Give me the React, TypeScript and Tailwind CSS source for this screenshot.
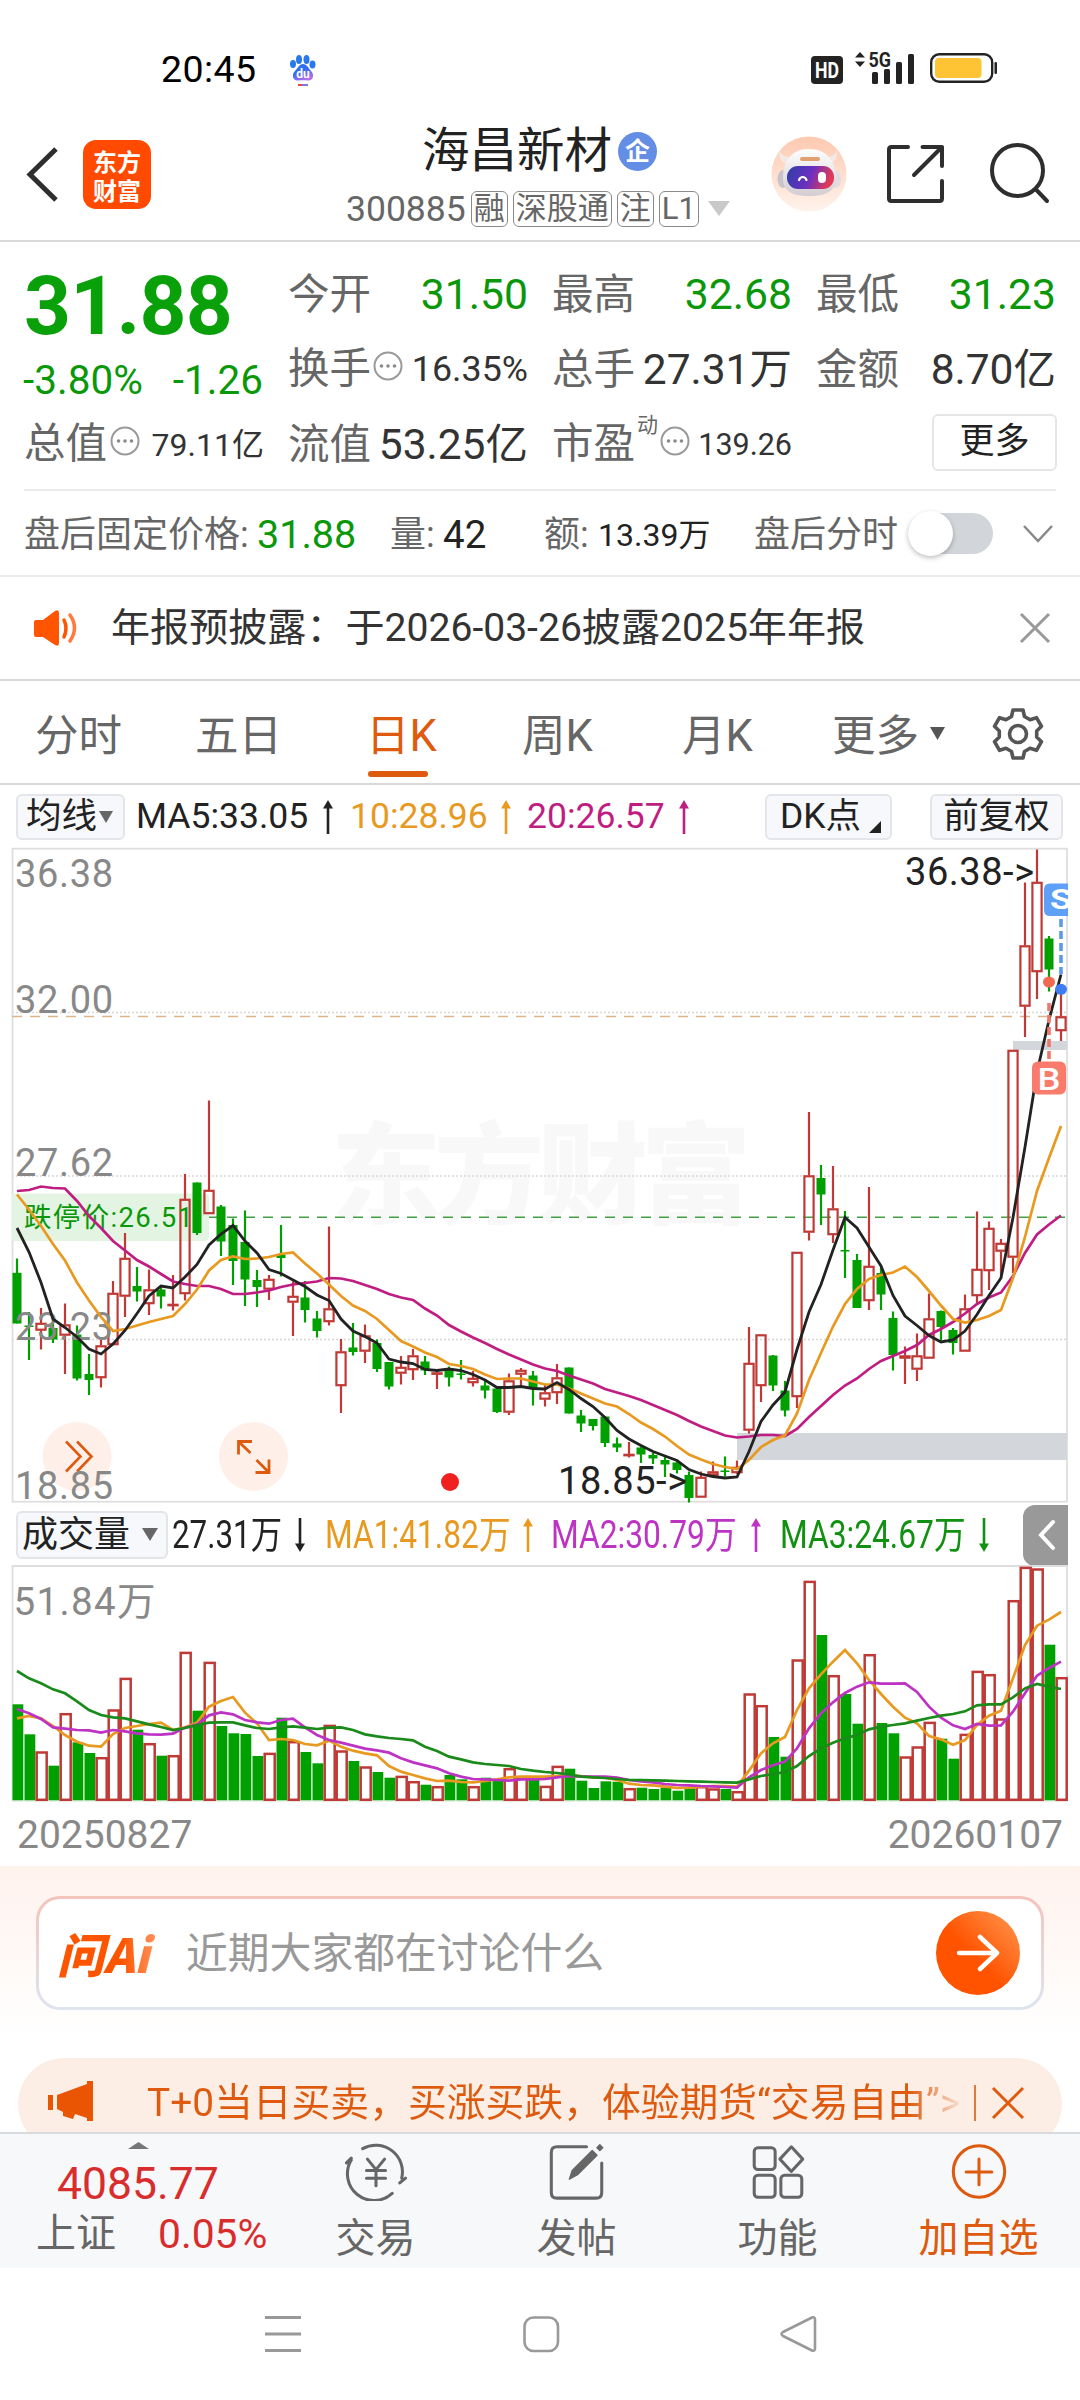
import type { ReactNode } from "react";

type Candle = ["r" | "g", number, number, number, number];

const STEP = 12;
const FIRST_X = 17;
const xAt = (i: number) => FIRST_X + i * STEP;

/* colour, high, body top, body bottom, low */
const candles: Candle[] = [
  ["g", 411.5, 425.8, 476.5, 476.5], ["g", 465, 478.5, 480, 513], ["r", 461, 476, 483.5, 502.5], ["g", 473.5, 481, 492.5, 496],
  ["r", 456.5, 477.5, 488.5, 527], ["g", 478.5, 487.5, 531.5, 533.5], ["g", 507, 527, 533, 548], ["r", 491.5, 498.5, 531, 540.5],
  ["r", 434, 446, 498, 498], ["r", 386, 411, 449.5, 470], ["g", 420, 439, 444.5, 454.5], ["r", 422.5, 442.5, 457, 468],
  ["g", 439.5, 442.5, 449.5, 461.5], ["r", 428, 457, 458.5, 463.5], ["r", 327, 352, 447, 453.5], ["g", 335.5, 335.5, 386, 388],
  ["r", 253.5, 343, 367, 367], ["g", 358, 359.5, 394.5, 409], ["g", 371.5, 378, 414, 438], ["g", 363.5, 395, 432.5, 459],
  ["g", 423, 433, 440, 460], ["r", 428, 432, 442.5, 453], ["g", 378, 408, 411, 429.5], ["r", 434.5, 449, 455.5, 489],
  ["g", 434, 450.5, 463, 475.5], ["g", 464, 471.5, 484, 490.5], ["r", 379.5, 461.5, 475, 478.5], ["r", 492, 504.5, 539, 566],
  ["g", 476, 500.5, 505, 508.5], ["r", 477.5, 488.5, 504.5, 516], ["g", 492.5, 496, 522, 525], ["g", 515, 515, 539.5, 542.5],
  ["r", 509, 520, 526.5, 537.5], ["r", 502, 508.5, 523, 533], ["g", 509, 514.5, 523.5, 528], ["r", 524.5, 525.5, 527.5, 542],
  ["g", 519.5, 523, 530.5, 539.5], ["g", 513, 526.5, 528, 532.5], ["r", 524, 531, 536, 539.5], ["g", 533, 538.5, 543.5, 551.5],
  ["g", 540.5, 541.5, 565, 566], ["r", 526.5, 533.5, 565.5, 568], ["r", 521, 523, 527.5, 539], ["g", 524, 528.5, 542, 558.5],
  ["r", 538, 545.5, 552.5, 559.5], ["r", 517, 530.5, 546, 557], ["g", 520.5, 520.5, 566.5, 566.5], ["g", 563, 568.5, 576.5, 585],
  ["g", 572, 572, 579, 583.5], ["g", 569.5, 569.5, 596, 600], ["g", 590.5, 596.5, 600.5, 605], ["r", 595, 607, 608.5, 610.5],
  ["g", 599.5, 600.5, 607.5, 616], ["g", 605.5, 608, 611.5, 617], ["g", 608, 613, 617.5, 630], ["g", 613, 615.5, 623, 626.5],
  ["g", 624.5, 628, 651, 655.5], ["r", 624.5, 630, 650.5, 650.5], ["r", 614.5, 624.5, 628.5, 629.5], ["g", 609.5, 623.5, 625, 629.5],
  ["r", 613.5, 620, 626, 627], ["r", 480, 516, 583.5, 586.5], ["r", 487.5, 487.5, 539, 555], ["g", 508, 508.5, 538.5, 544],
  ["g", 534, 543.5, 563.5, 569.5], ["r", 405, 405, 550, 561], ["r", 265, 328.5, 385.5, 393.5], ["g", 318, 331, 347.5, 378],
  ["r", 319, 361.5, 388, 396], ["g", 364, 403, 404, 431], ["g", 407, 413, 461, 461], ["r", 340, 419, 454, 463],
  ["g", 420, 426, 447.5, 463], ["g", 464.5, 471, 508, 523.5], ["r", 499.5, 508.5, 511.5, 537], ["r", 486.5, 508.5, 522.5, 534],
  ["r", 446.5, 471.5, 511.5, 511.5], ["g", 463.5, 464, 480, 494], ["g", 481, 483, 496, 507.5], ["r", 447.5, 461.5, 504.5, 504.5],
  ["r", 364.5, 422, 449, 456], ["r", 374.5, 381, 424, 443], ["r", 392, 396, 404.5, 431], ["r", 203, 203, 410.5, 426],
  ["r", 35.5, 98.5, 159.5, 190], ["r", 2.5, 35, 125, 152], ["g", 89, 91.5, 122.5, 144.5], ["r", 140.5, 169.5, 184, 194],
];

const ma5 = [381, 405, 435.5, 472, 480.5, 490, 502, 507, 497, 483.5, 466.5, 449, 439, 441, 430, 417.5, 398, 387, 378.5, 394, 406, 422.5, 426.5, 433, 439.5, 448, 453.5, 472, 484, 489.5, 496, 512, 515, 516.5, 522.5, 523.5, 522, 523.5, 527.5, 533, 540.5, 540.5, 539.5, 541.5, 542, 535.5, 542.5, 551.5, 559.5, 570.5, 583.5, 592, 598.5, 604.5, 609, 613.5, 622.5, 627, 629.5, 631, 630, 604.5, 574.5, 558, 545, 502.5, 465, 437.5, 403, 370.5, 381, 400, 419, 448.5, 469, 478.5, 488.5, 495, 493, 484, 467.5, 448.5, 431, 370.5, 300, 225, 173, 127.5];
const ma10 = [347.5, 362.5, 379, 397, 413.5, 435.5, 453.5, 470, 484, 482, 478.5, 475, 472, 469, 457, 442.5, 423.5, 413, 409.5, 412, 411.5, 410, 407, 405.5, 416.5, 426.5, 437.5, 449, 458.5, 464, 472, 483, 494, 499.5, 505.5, 510, 517, 519, 522, 527.5, 532, 531.5, 531.5, 534.5, 537.5, 537.5, 541.5, 546.5, 551.5, 556.5, 559.5, 567, 575.5, 582, 589.5, 599, 607.5, 612.5, 617, 620, 622, 613, 600, 593, 588.5, 566.5, 533, 506, 479.5, 457, 442, 432, 428, 425.5, 419.5, 430, 444, 458.5, 472, 475.5, 473, 469, 463, 431, 390, 344, 311, 279];
const ma20 = [344, 343, 339.5, 341, 341.5, 354, 369, 381, 394, 403.5, 413, 419.5, 427, 434.5, 437, 439, 439, 442, 447, 447, 445.5, 443.5, 440, 437.5, 436, 434.5, 431, 431.5, 434, 438, 442, 447, 450.5, 453, 461.5, 468.5, 478, 484.5, 490.5, 496, 502, 507.5, 512.5, 517.5, 521.5, 524, 528.5, 532.5, 536.5, 542, 545.5, 549, 553, 558, 563, 568, 574, 579.5, 584, 588.5, 590.5, 589.5, 588, 588, 589, 582, 570, 559, 548, 538.5, 531.5, 522, 514, 509, 504, 498, 488, 482, 475, 466.5, 457, 450.5, 445.5, 429, 406, 387.5, 377.5, 368.5];

const volTops = [140.3, 170.3, 187.3, 201.7, 149, 178.3, 189, 193, 145.3, 113.7, 165.7, 179, 191.7, 191, 87.7, 146.7, 97.7, 162, 169.3, 170, 192, 188.7, 153.7, 177, 188, 199.3, 160.7, 186.3, 197, 202.3, 208, 213.7, 211.7, 217, 220.7, 222, 211, 215.3, 222, 213.7, 216, 204, 212.7, 216, 221.7, 201.7, 204.7, 216.7, 224, 217.3, 217.7, 224, 223.7, 225, 223.7, 226.7, 224.3, 222, 224.3, 225, 227, 129.3, 141, 173, 192.7, 95.3, 16.7, 71, 111, 130, 159.7, 90, 159, 169.3, 192.3, 182.3, 157.7, 174.7, 194.7, 169.7, 106.7, 110, 154.3, 36, 2.7, 4.3, 80.7, 113];
const volMa1 = [685, 678, 685, 708, 735, 755, 767, 770, 732, 714, 708, 702, 698, 720, 712, 698, 650, 633, 621, 668, 700, 750, 747, 750, 762, 766, 752, 770, 782, 790, 796, 828, 845, 855, 865, 873, 872, 876, 877, 873, 868, 862, 860, 860, 860, 858, 857, 858, 862, 863, 870, 881, 885, 886, 890, 894, 893, 890, 888, 888, 890, 842, 790, 760, 741, 660, 595, 553, 515, 480, 520, 570, 612, 650, 683, 700, 738, 748, 764, 750, 705, 677, 662, 565, 465, 407, 389, 366];
const volMa2 = [657, 670, 687, 712, 716, 720, 721, 728, 720, 724, 730, 733, 734, 731, 713, 704, 676, 667, 673, 690, 697, 701, 690, 686, 712, 735, 750, 758, 767, 776, 781, 788, 805, 817, 826, 835, 850, 860, 867, 868, 870, 872, 868, 868, 867, 862, 858, 860, 860, 860, 863, 870, 874, 877, 882, 885, 886, 888, 889, 891, 893, 862, 840, 826, 815, 775, 715, 670, 637, 609, 590, 577, 581, 581, 580, 606, 650, 683, 706, 717, 702, 707, 706, 665, 610, 557, 534, 515];
const volMa3 = [543, 565, 580, 598, 610, 634, 660, 675, 682, 685, 694, 703, 711, 720, 714, 705, 698, 697, 697, 706, 714, 717, 712, 709, 713, 717, 713, 712, 720, 733, 739, 744, 747, 751, 770, 783, 800, 808, 817, 822, 825, 828, 837, 842, 846, 849, 853, 860, 862, 864, 867, 870, 870, 871, 872, 873, 874, 875, 876, 877, 878, 868, 858, 852, 846, 828, 798, 775, 758, 745, 735, 718, 710, 705, 700, 692, 684, 677, 672, 664, 646, 643, 643, 622, 595, 582, 590, 597];

const linePoints = (ys: number[]) => ys.map((y, i) => `${xAt(i)},${y}`).join(" ");
const volLine = (vs: number[]) => linePoints(vs.map((v) => v / 3 - 74));

const RED = "#bf3a36";
const GREEN = "#00a000";

function StatusBar() {
  return (
    <div className="flex h-[110px] items-start pt-[46px]">
      <span className="ml-[161px] w-[124px] text-[37.500px] leading-[46px] tracking-[0.4px] text-black">20:45</span>
      <svg className="mt-[8px]" width="36" height="34" viewBox="0 0 36 34">
        <defs>
          <linearGradient id="paw" x1="0" y1="0" x2="0.5" y2="1">
            <stop offset="0.5" stopColor="#2f6ff0" />
            <stop offset="1" stopColor="#b36cf0" />
          </linearGradient>
        </defs>
        <ellipse cx="8" cy="10" rx="3" ry="4" fill="#2a78ee" />
        <ellipse cx="14" cy="5.500" rx="3" ry="4.500" fill="#2a78ee" />
        <ellipse cx="21.500" cy="5.500" rx="3" ry="4.500" fill="#2a78ee" />
        <ellipse cx="27.500" cy="10.500" rx="3" ry="4" fill="#2a78ee" />
        <path d="M18 10c4 0 5.500 4 8 7 4 4 2 10-3 9.500-3-.5-7-.5-10 0-5 .5-7-5.500-3-9.500 3-3 4-7 8-7z" fill="url(#paw)" />
        <text x="18" y="24" textAnchor="middle" fontSize="12" fontWeight="700" fill="#fff">du</text>
        <rect x="13" y="30" width="10" height="2" fill="#7a77e8" />
        <rect x="13" y="30" width="4" height="2" fill="#e04848" />
      </svg>
      <svg className="ml-[490px] mt-[5px] overflow-visible" width="190" height="36" viewBox="0 0 190 36">
        <rect x="0" y="5" width="32" height="28" rx="4" fill="#232323" />
        <text x="16" y="27" textAnchor="middle" fontSize="22" fontWeight="700" fill="#fff" textLength="24" lengthAdjust="spacingAndGlyphs">HD</text>
        <path d="M49 1l5 5.500H44zM49 16l5-5.500H44z" fill="#232323" />
        <text x="57.500" y="16" fontSize="20.500" fontWeight="700" fill="#232323" textLength="22.500" lengthAdjust="spacingAndGlyphs">5G</text>
        <rect x="61" y="21" width="6" height="12" rx="1.500" fill="#232323" />
        <rect x="73" y="18" width="6" height="15" rx="1.500" fill="#232323" />
        <rect x="85" y="11" width="6" height="22" rx="1.500" fill="#232323" />
        <rect x="97" y="3" width="6" height="30" rx="1.500" fill="#232323" />
        <rect x="120.200" y="3.200" width="61" height="27.600" rx="8" fill="none" stroke="#232323" strokeWidth="2.400" />
        <rect x="124" y="7" width="46.500" height="20" rx="4" fill="#ffc433" />
        <rect x="183.500" y="11" width="2.500" height="12" rx="1.200" fill="#232323" />
      </svg>
    </div>
  );
}

function Tag({ children }: { children: ReactNode }) {
  return (
    <span className="flex h-[36px] items-center justify-center rounded-[6px] border-[1.5px] border-[#8a8a8a] px-[2px] text-[31px] leading-[34px] text-[#666]">
      {children}
    </span>
  );
}

function Header() {
  return (
    <header className="flex h-[132px] border-b-2 border-[#d9d9d9]">
      <svg className="ml-[24px] mt-[35px]" width="38" height="58" viewBox="0 0 38 58">
        <path d="M32 4L6 29.500L32 55" fill="none" stroke="#2e2e2e" strokeWidth="5" />
      </svg>
      <div className="ml-[21px] mt-[30px] flex h-[69px] w-[68px] flex-col items-center justify-center rounded-[13px] bg-[#ff4a00] font-['Noto_Sans_CJK_SC'] text-[24px] font-bold leading-[29px] text-white">
        <span>东方</span>
        <span>财富</span>
      </div>
      <div className="ml-[195px] w-[400px] pt-[12px]">
        <div className="flex h-[58px] items-center pl-[76px]">
          <span className="text-[47.500px] leading-[58px] text-[#222]">海昌新材</span>
          <span className="ml-[6px] flex size-[39px] items-center justify-center rounded-full bg-[#648de5] text-[25px] font-bold leading-none text-white">企</span>
        </div>
        <div className="mt-[8px] flex h-[40px] items-center gap-[5px] pt-[1px]">
          <span className="text-[35.500px] leading-[40px] text-[#666]">300885</span>
          <Tag>融</Tag>
          <Tag>深股通</Tag>
          <Tag>注</Tag>
          <Tag>L1</Tag>
          <svg className="ml-[4px]" width="22" height="15" viewBox="0 0 22 15">
            <path d="M0 0h22L11 15z" fill="#c9c9c9" />
          </svg>
        </div>
      </div>
      <svg className="ml-[25px] mt-[26px]" width="76" height="76" viewBox="0 0 76 76">
        <defs>
          <linearGradient id="halo" x1="0" y1="0" x2="0" y2="1">
            <stop offset="0" stopColor="#fdc9b0" />
            <stop offset="1" stopColor="#fff3ec" />
          </linearGradient>
          <linearGradient id="visor" x1="0" y1="0" x2="1" y2="0.200">
            <stop offset="0" stopColor="#2f3fa8" />
            <stop offset="0.550" stopColor="#6a2fc0" />
            <stop offset="1" stopColor="#e23a56" />
          </linearGradient>
          <linearGradient id="shell" x1="0" y1="0" x2="0" y2="1">
            <stop offset="0" stopColor="#ffffff" />
            <stop offset="1" stopColor="#d3ccd2" />
          </linearGradient>
        </defs>
        <circle cx="38" cy="38" r="37.500" fill="url(#halo)" />
        <path d="M8 15c0 6 2 12 9 13l7-7c-7 1-12 0-16-6zM66 15c0 6-2 12-8 13l-7-7c7 1 11 0 15-6z" fill="#f3e9e6" />
        <ellipse cx="12" cy="43" rx="5.500" ry="9" fill="#c9c4ca" />
        <ellipse cx="65" cy="43" rx="5" ry="9" fill="#e2dce0" />
        <path d="M38 13c18 0 27 13 27 29 0 12-8 18-27 18S12 54 12 42c0-16 8-29 26-29z" fill="url(#shell)" />
        <rect x="29" y="21" width="20" height="4" rx="2" fill="#e0a070" />
        <rect x="16" y="30" width="47" height="23" rx="11" fill="url(#visor)" />
        <path d="M28 44c1.500-4 6-4 7.500 0" fill="none" stroke="#fff" strokeWidth="2.200" strokeLinecap="round" />
        <rect x="47" y="36" width="8" height="11" rx="4" fill="#fff" />
      </svg>
      <svg className="ml-[39px] mt-[34px]" width="60" height="60" viewBox="0 0 60 60" fill="none" stroke="#2e2e2e" strokeWidth="4" strokeLinecap="round" strokeLinejoin="round">
        <path d="M22 3H5.500Q3 3 3 5.500V54.500Q3 57 5.500 57H53.500Q56 57 56 54.500V37M36.500 3H56V22M56 3L28 31" />
      </svg>
      <svg className="ml-[42px] mt-[31px]" width="62" height="64" viewBox="0 0 62 64" fill="none" stroke="#2e2e2e" strokeWidth="4" strokeLinecap="round">
        <circle cx="29.500" cy="29.500" r="25.500" />
        <path d="M47.500 48L59 60" />
      </svg>
    </header>
  );
}

function Info() {
  return (
    <svg width="30" height="30" viewBox="0 0 30 30" className="shrink-0">
      <circle cx="15" cy="15" r="13.500" fill="none" stroke="#999" strokeWidth="2" />
      <circle cx="8.500" cy="15" r="1.800" fill="#8a8a8a" />
      <circle cx="15" cy="15" r="1.800" fill="#8a8a8a" />
      <circle cx="21.500" cy="15" r="1.800" fill="#8a8a8a" />
    </svg>
  );
}

function Stat({ label, children }: { label: string; children: ReactNode }) {
  return (
    <div className="flex h-[75px] items-center justify-between">
      <span className="text-[41.500px] leading-[75px] text-[#666]">{label}</span>
      {children}
    </div>
  );
}

function Quotes() {
  const green = "text-[42.700px] text-[#0a980a]";
  const dark = "text-[42.500px] text-[#333]";
  return (
    <section className="mx-[24px] flex h-[249px] gap-[24px] border-b-2 border-[#ebebeb] pt-[15px] whitespace-nowrap">
      <div className="w-[240px]">
        <div className="h-[92px] text-[82px] font-bold leading-[98px] tracking-[-0.8px] text-[#0aa00a]">31.88</div>
        <div className="flex h-[58px] items-center justify-between pr-px pt-[4px] text-[40.500px] text-[#0a980a]">
          <span className="-ml-px">-3.80%</span>
          <span>-1.26</span>
        </div>
        <div className="flex h-[75px] items-center justify-between">
          <span className="text-[41.500px] text-[#666]">总值</span>
          <span className="-ml-[8px] -mt-[8px]"><Info /></span>
          <span className="text-[32px] text-[#333]">79.11亿</span>
        </div>
      </div>
      <div className="w-[240px]">
        <Stat label="今开"><span className={green}>31.50</span></Stat>
        <div className="flex h-[75px] items-center">
          <span className="text-[41.500px] text-[#666]">换手</span>
          <span className="ml-[2px] -mt-[8px]"><Info /></span>
          <span className="ml-auto text-[35.800px] text-[#333]">16.35%</span>
        </div>
        <Stat label="流值"><span className={dark}>53.25亿</span></Stat>
      </div>
      <div className="w-[240px]">
        <Stat label="最高"><span className={green}>32.68</span></Stat>
        <Stat label="总手"><span className={dark}>27.31万</span></Stat>
        <div className="flex h-[75px] items-center">
          <span className="text-[41.500px] text-[#666]">市盈</span>
          <span className="-mt-[38px] ml-[2px] text-[21px] text-[#666]">动</span>
          <span className="ml-[2px] -mt-[8px]"><Info /></span>
          <span className="ml-auto text-[30.500px] text-[#333]">139.26</span>
        </div>
      </div>
      <div className="w-[240px]">
        <Stat label="最低"><span className={green}>31.23</span></Stat>
        <Stat label="金额"><span className={dark}>8.70亿</span></Stat>
        <div className="-mr-[1px] ml-auto mt-[7px] flex h-[57px] w-[125px] items-center justify-center rounded-[6px] border-2 border-[#e6e6e6] text-[35px] text-[#222]">更多</div>
      </div>
    </section>
  );
}

function AfterHours() {
  return (
    <section className="flex h-[86px] items-center border-b-2 border-[#ebebeb] pl-[24px] pt-[4px] text-[36px] text-[#666] whitespace-nowrap">
      <span className="w-[233px]">盘后固定价格:</span>
      <span className="w-[133px] text-[39.500px] text-[#0a980a]">31.88</span>
      <span className="w-[53px]">量:</span>
      <span className="w-[101px] text-[38.500px] text-[#222]">42</span>
      <span className="w-[54px]">额:</span>
      <span className="w-[156px] text-[32px] text-[#222]">13.39万</span>
      <span className="w-[154px]">盘后分时</span>
      <span className="-mt-[4px] flex h-[41px] w-[85px] items-center rounded-full bg-[#d2d5d9]">
        <span className="size-[45px] rounded-full bg-white shadow-[0_2px_5px_rgba(0,0,0,0.25)]" />
      </span>
      <svg className="-mt-[2px] ml-[29px]" width="32" height="20" viewBox="0 0 32 20">
        <path d="M2 2L16 17L30 2" fill="none" stroke="#888" strokeWidth="2.500" />
      </svg>
    </section>
  );
}

function Notice() {
  return (
    <section className="flex h-[104px] items-center border-b-2 border-[#d9d9d9] pl-[32px] whitespace-nowrap">
      <svg width="48" height="38" viewBox="0 0 48 38">
        <path d="M4 11h7L23 2q4-2 4 2v30q0 4-4 2L11 28H4q-2 0-2-2V13q0-2 2-2z" fill="#ff5400" />
        <path d="M32 11q4 8 0 17" fill="none" stroke="#ff5400" strokeWidth="3.500" strokeLinecap="round" />
        <path d="M38 6q9 13 0 26" fill="none" stroke="#ff7a3c" strokeWidth="3.500" strokeLinecap="round" />
      </svg>
      <span className="ml-[31px] pt-px text-[39.100px] text-[#333]">年报预披露：于2026-03-26披露2025年年报</span>
      <svg className="ml-auto mr-[29px]" width="32" height="32" viewBox="0 0 32 32">
        <path d="M2 2L30 30M30 2L2 30" stroke="#999" strokeWidth="3" />
      </svg>
    </section>
  );
}

function Tabs() {
  return (
    <nav className="flex h-[104px] items-start border-b-2 border-[#d9d9d9] pl-[35px] pt-[22px] text-[43.500px] leading-[68px] text-[#666] whitespace-nowrap">
      <span className="w-[160px]">分时</span>
      <span className="w-[171px]">五日</span>
      <span className="w-[156px] text-[#dd5a0f]">
        日K
        <span className="ml-[2px] block h-[6px] w-[60px] rounded-[3px] bg-[#dd5a0f]" />
      </span>
      <span className="w-[160px]">周K</span>
      <span className="w-[150px]">月K</span>
      <span className="w-[98px]">更多</span>
      <svg className="mt-[24px]" width="15" height="13" viewBox="0 0 15 13">
        <path d="M0 0h15L7.500 13z" fill="#555" />
      </svg>
      <svg className="ml-[46px] mt-[4px]" width="54" height="54" viewBox="0 0 54 54" fill="none" stroke="#555" strokeWidth="3.600" strokeLinejoin="round">
        <path d="M22 3h10l1.500 6.500 5.500 3.200 6.500-2 5 8.600-4.800 4.700v6l4.800 4.700-5 8.600-6.500-2-5.500 3.200L32 51H22l-1.500-6.500-5.500-3.200-6.500 2-5-8.600L8.300 30v-6l-4.800-4.700 5-8.600 6.500 2 5.500-3.200z" />
        <circle cx="27" cy="27" r="8.500" />
      </svg>
    </nav>
  );
}

function Arrow({ color, down = false }: { color: string; down?: boolean }) {
  return (
    <svg width="12" height="34" viewBox="0 0 12 34" className={down ? "rotate-180" : ""}>
      <path d="M6 4V34" stroke={color} strokeWidth="2.600" />
      <path d="M6 0l5 8.500H1z" fill={color} />
    </svg>
  );
}

const chip = "flex items-center rounded-[6px] border-2 border-[#e3e5ea] bg-[#f7f8fb] text-[#222]";

function MaRow() {
  return (
    <div className="flex h-[62px] items-center pl-[16px] pt-[2px] text-[35.500px] whitespace-nowrap">
      <div className={`${chip} h-[46px] w-[109px] pl-[8px] text-[35.500px]`}>
        均线
        <svg className="ml-[2px]" width="14" height="12" viewBox="0 0 14 12"><path d="M0 0h14L7 12z" fill="#666" /></svg>
      </div>
      <span className="ml-[11px] w-[186px] text-[#222]">MA5:33.05</span>
      <Arrow color="#222" />
      <span className="ml-[14px] w-[152px] pl-[2px] text-[#e8991f]">10:28.96</span>
      <Arrow color="#e8991f" />
      <span className="ml-[13px] w-[153px] pl-[2px] text-[#bf1d82]">20:26.57</span>
      <Arrow color="#bf1d82" />
      <div className={`${chip} ml-[75px] h-[46px] w-[127px] pl-[13px] text-[35.500px]`}>
        DK点
        <svg className="ml-[8px] mt-[20px]" width="12" height="12" viewBox="0 0 12 12"><path d="M12 0v12H0z" fill="#222" /></svg>
      </div>
      <div className={`${chip} ml-[38px] h-[46px] w-[133px] justify-center text-[35.500px]`}>前复权</div>
    </div>
  );
}

function PriceChart() {
  const axis: [string, number][] = [["36.38", 40], ["32.00", 166], ["27.62", 328.5], ["23.23", 493], ["18.85", 652]];
  return (
    <svg width="1080" height="658" viewBox="0 0 1080 658" className="block">
      <text x="541" y="368" textAnchor="middle" fontFamily="Noto Sans CJK SC" fontWeight="900" fontSize="110" fill="#f8f8f8" textLength="420">东方财富</text>
      {[165.6, 329, 492.500].map((y) => (
        <line key={y} x1="12" x2="1067" y1={y} y2={y} stroke="#d8d8d8" strokeWidth="1.500" strokeDasharray="2 2" />
      ))}
      <rect x="12.500" y="1.700" width="1054.500" height="653" fill="none" stroke="#dedede" strokeWidth="1.800" />
      <rect x="737" y="586" width="330" height="27" fill="#d3d6da" />
      <rect x="1013" y="194" width="54" height="9" fill="#d3d6da" />
      <line x1="12" x2="1067" y1="169.500" y2="169.500" stroke="#dcb48a" strokeWidth="1.500" strokeDasharray="10 8" />
      <line x1="209" x2="1067" y1="370.300" y2="370.300" stroke="#43a047" strokeWidth="1.500" strokeDasharray="10 8" />
      <path d="M12 346.500H204q5 0 5 5V389q0 5-5 5H12z" fill="#e3f4e2" />
      <circle cx="77" cy="609.500" r="34.500" fill="#fef0e9" />
      <circle cx="253.500" cy="609.500" r="34.500" fill="#fef0e9" />
      {candles.map(([c, h, t, b, l], i) => {
        const x = xAt(i);
        if (c === "g") {
          return (
            <g key={i} fill={GREEN}>
              <rect x={x - 1.100} y={h} width="2.200" height={l - h} />
              <rect x={x - 4.500} y={t} width="9" height={Math.max(b - t, 1.500)} />
            </g>
          );
        }
        return (
          <g key={i} stroke={RED} strokeWidth="2.200" fill="none">
            <path d={`M${x} ${h}V${t}M${x} ${b}V${l}`} />
            <rect x={x - 4.600} y={t + 0.800} width="9.200" height={Math.max(b - t - 1.600, 0.500)} />
          </g>
        );
      })}
      <text x="24" y="379.500" fontSize="27.500" fill="#0a980a" textLength="169">跌停价:26.51</text>
      <path d="M66 594.500L80.500 609.500L66 624.500M77 594.500L91.500 609.500L77 624.500" fill="none" stroke="#dd5a0f" strokeWidth="2.600" />
      <path d="M238.500 607.500V594.500H252M239 595L250.500 606M255.500 625.500H269V612.500M268.500 625L256.500 613" fill="none" stroke="#dd5a0f" strokeWidth="2.800" />
      {axis.map(([t, y]) => (
        <text key={t} x="15" y={y} fontSize="38" fill="#888" textLength="98">{t}</text>
      ))}
      <polyline points={linePoints(ma20)} fill="none" stroke="#bf1d82" strokeWidth="2.700" />
      <polyline points={linePoints(ma10)} fill="none" stroke="#e8991f" strokeWidth="2.700" />
      <polyline points={linePoints(ma5)} fill="none" stroke="#222" strokeWidth="2.800" />
      <circle cx="450" cy="635" r="9" fill="#f02020" />
      <text x="558" y="646.500" fontSize="38" fill="#222" textLength="129">18.85-&gt;</text>
      <text x="905" y="37.500" fontSize="38" fill="#222" textLength="129">36.38-&gt;</text>
      <path d="M1068 36.500H1050q-6 0-6 6V63q0 6 6 6H1068z" fill="#5ea0f8" />
      <svg x="1044" y="36" width="24" height="34">
        <text x="6" y="26" fontSize="28" fontWeight="700" fill="#fff" textLength="22" lengthAdjust="spacingAndGlyphs">S</text>
      </svg>
      <line x1="1061" x2="1061" y1="72" y2="127" stroke="#5b9bea" strokeWidth="3.600" strokeDasharray="8 4" />
      <ellipse cx="1061" cy="142.300" rx="6" ry="5.500" fill="#3d7df0" />
      <ellipse cx="1049" cy="135" rx="6" ry="5.500" fill="#f06a50" />
      <line x1="1049" x2="1049" y1="156" y2="212" stroke="#f0786a" strokeWidth="3.600" strokeDasharray="8 4" />
      <rect x="1032" y="214.500" width="34" height="33" rx="6" fill="#f97b6b" />
      <text x="1049" y="242.500" textAnchor="middle" fontSize="31" fontWeight="500" fill="#fff" textLength="23" lengthAdjust="spacingAndGlyphs">B</text>
    </svg>
  );
}

function VolumeRow() {
  return (
    <div className="flex h-[59px] items-center pl-[16px] pt-px text-[38px] whitespace-nowrap">
      <div className={`${chip} h-[48px] w-[152px] pl-[4px] text-[36px]`}>
        成交量
        <svg className="-mt-[2px] ml-[12px]" width="16" height="13" viewBox="0 0 16 13"><path d="M0 0h16L8 13z" fill="#666" /></svg>
      </div>
      <span className="ml-[4px] flex w-[122px] pt-px"><span className="origin-left scale-x-[0.825] text-[#222]">27.31万</span></span>
      <Arrow color="#222" down />
      <span className="ml-[19px] flex w-[197px] pt-px"><span className="origin-left scale-x-[0.835] text-[#e8991f]">MA1:41.82万</span></span>
      <Arrow color="#e8991f" />
      <span className="ml-[17px] flex w-[199px] pt-px"><span className="origin-left scale-x-[0.835] text-[#bd33c4]">MA2:30.79万</span></span>
      <Arrow color="#bd33c4" />
      <span className="ml-[18px] flex w-[198px] pt-px"><span className="origin-left scale-x-[0.835] text-[#119011]">MA3:24.67万</span></span>
      <Arrow color="#119011" down />
      <div className="ml-auto mr-[12px] flex h-[61px] w-[45px] shrink-0 items-center justify-center rounded-l-[12px] bg-[#999]">
        <svg width="20" height="32" viewBox="0 0 20 32" className="ml-[2px]">
          <path d="M16 3L4 16L16 29" fill="none" stroke="#fff" strokeWidth="4" strokeLinecap="round" />
        </svg>
      </div>
    </div>
  );
}

function VolumeChart() {
  const base = 236.300;
  return (
    <svg width="1080" height="240" viewBox="0 0 1080 240" className="block">
      <path d={`M12.500 ${base}V2H1067V${base}`} fill="none" stroke="#dedede" strokeWidth="1.800" />
      <line x1="12" x2="1067" y1="237" y2="237" stroke="#d6e8d6" strokeWidth="1" />
      <text x="13.500" y="51" fontSize="38.500" fill="#888" textLength="142">51.84万</text>
      {volTops.map((t, i) => {
        const x = xAt(i);
        return candles[i][0] === "g" ? (
          <rect key={i} x={x - 4.500} y={t} width="10.800" height={base - t} fill={GREEN} />
        ) : (
          <rect key={i} x={x - 4.300} y={t + 1.200} width="10" height={base - t - 1.700} fill="#fff" stroke={RED} strokeWidth="2.500" />
        );
      })}
      <polyline points={volLine(volMa1)} fill="none" stroke="#e8991f" strokeWidth="2.700" />
      <polyline points={volLine(volMa2)} fill="none" stroke="#bd33c4" strokeWidth="2.700" />
      <polyline points={volLine(volMa3)} fill="none" stroke="#1a8a1a" strokeWidth="2.700" />
    </svg>
  );
}

function AskAi() {
  return (
    <section className="h-[266px] overflow-hidden bg-[linear-gradient(to_bottom,#fff2ed,#ffffff_65%)]">
      <div className="mx-[36px] mt-[30px] h-[114px] rounded-[24px] bg-[linear-gradient(to_bottom,#f4c4bb,#dde5f0)] p-[3px]">
        <div className="flex h-full items-center rounded-[21px] bg-white pl-[18px] pr-[21px]">
          <span className="w-[129px] bg-[linear-gradient(to_right,#fd5400_50%,#ff9a6a_80%)] bg-clip-text font-['Noto_Sans_CJK_SC'] text-[47px] font-black italic leading-[60px] tracking-[-0.5px] text-transparent">问Ai</span>
          <span className="pt-[2px] text-[41.800px] text-[#999]">近期大家都在讨论什么</span>
          <div className="ml-auto flex size-[84px] items-center justify-center rounded-full bg-[linear-gradient(to_top_right,#ff5300_45%,#ff9a52)]">
            <svg width="44" height="40" viewBox="0 0 44 40" fill="none" stroke="#fff" strokeWidth="4.500" strokeLinecap="round" strokeLinejoin="round">
              <path d="M3 20H40M24 4L41 20L24 36" />
            </svg>
          </div>
        </div>
      </div>
      <div className="mx-[18px] mt-[48px] flex h-[92px] items-center rounded-[46px] bg-[#fceee5] pl-[29px] text-[38.800px] text-[#dd5a0f] whitespace-nowrap">
        <svg className="-mt-[6px] shrink-0" width="48" height="40" viewBox="0 0 48 40" fill="#ea5504">
          <path d="M1 14h5v15H1zM10 14L40 3V0h6v40h-6v-3l-12-4-2 5-10-3v-4l-6-3z" />
        </svg>
        <span className="-mt-px ml-[52px] w-[819px] shrink-0 overflow-hidden bg-[linear-gradient(to_right,#dd5a0f_93%,#fceee5_100%)] bg-clip-text text-transparent">T+0当日买卖，买涨买跌，体验期货“交易自由”&gt;</span>
        <span className="-mt-[2px] ml-[8px] h-[36px] w-[2px] shrink-0 bg-[#dd7a40]" />
        <svg className="-mt-[3px] ml-[15px] shrink-0" width="34" height="34" viewBox="0 0 34 34">
          <path d="M2 2L32 32M32 2L2 32" stroke="#dd5a0f" strokeWidth="3" />
        </svg>
      </div>
    </section>
  );
}

function NavItem({ label, active = false, children }: { label: string; active?: boolean; children: ReactNode }) {
  return (
    <div className={`flex w-[201px] flex-col items-center pt-[8px] text-[40px] ${active ? "text-[#dd5a0f]" : "text-[#666]"}`}>
      <svg width="66" height="62" viewBox="0 0 66 62" fill="none" stroke="currentColor" strokeWidth="3.200" strokeLinecap="round" strokeLinejoin="round">
        {children}
      </svg>
      <span className="mt-[9px] leading-[58px]">{label}</span>
    </div>
  );
}

function BottomBar() {
  return (
    <nav className="flex h-[136px] border-t-2 border-[#d8dade] bg-[#f7f8fa] whitespace-nowrap">
      <div className="w-[275px]">
        <svg className="ml-[128px] mt-[8px] block" width="21" height="7" viewBox="0 0 21 7"><path d="M10.500 0L21 7H0z" fill="#777" /></svg>
        <div className="ml-[57px] mt-[10px] h-[50px] text-[44.500px] leading-[50px] text-[#d92c2c]">4085.77</div>
        <div className="flex items-center leading-[50px]">
          <span className="ml-[36px] w-[122px] text-[40px] text-[#666]">上证</span>
          <span className="text-[40.800px] text-[#d92c2c]">0.05%</span>
        </div>
      </div>
      <NavItem label="交易">
        <path d="M19 7A28 28 0 0 1 60 38M50 54A28 28 0 0 1 7 19M7 17l-5 5M58 43l6-5" />
        <path d="M24 18l9 11 9-11M33 29v17M23 30h20M23 38h20" />
      </NavItem>
      <NavItem label="发帖">
        <path d="M43 5H12q-6 0-6 6v42q0 6 6 6h41q6 0 6-6V22" />
        <path d="M25 39l3-9L49 9l5 5L34 34z M54 6l3-3 3 3-3 3z" fill="currentColor" strokeWidth="1.500" />
      </NavItem>
      <NavItem label="功能">
        <rect x="8" y="6" width="22" height="23" rx="4" />
        <rect x="8" y="35" width="22" height="23" rx="4" />
        <rect x="36" y="35" width="22" height="23" rx="4" />
        <path d="M47 5L59 18L47 31L35 18z" />
      </NavItem>
      <NavItem label="加自选" active>
        <circle cx="33" cy="31" r="27" />
        <path d="M33 18v27M19.500 31.500h27" />
      </NavItem>
    </nav>
  );
}

function SystemNav() {
  return (
    <div className="flex h-[132px] items-start bg-white pt-[46px]">
      <svg className="ml-[263px]" width="40" height="40" viewBox="0 0 40 40" stroke="#999" strokeWidth="3">
        <path d="M2 3.500H38M2 20H38M2 36.500H38" />
      </svg>
      <svg className="ml-[218px]" width="40" height="40" viewBox="0 0 40 40" fill="none" stroke="#999" strokeWidth="2.600">
        <rect x="3.500" y="3.500" width="33.500" height="33.500" rx="9" />
      </svg>
      <svg className="ml-[217px]" width="42" height="40" viewBox="0 0 42 40" fill="none" stroke="#999" strokeWidth="2.600" strokeLinejoin="round">
        <path d="M5 18L34 3.500q3-1 3 2v29q0 3-3 2L5 22q-3-2 0-4z" />
      </svg>
    </div>
  );
}

export default function App() {
  return (
    <div className="h-[2400px] w-[1080px] overflow-hidden bg-white font-['Roboto','Noto_Sans_CJK_SC',sans-serif]">
      <StatusBar />
      <Header />
      <Quotes />
      <AfterHours />
      <Notice />
      <Tabs />
      <MaRow />
      <PriceChart />
      <VolumeRow />
      <VolumeChart />
      <div className="flex h-[62px] items-center justify-between pl-[17px] pr-[17px] text-[39px] text-[#888]">
        <span>20250827</span>
        <span>20260107</span>
      </div>
      <AskAi />
      <BottomBar />
      <SystemNav />
    </div>
  );
}
